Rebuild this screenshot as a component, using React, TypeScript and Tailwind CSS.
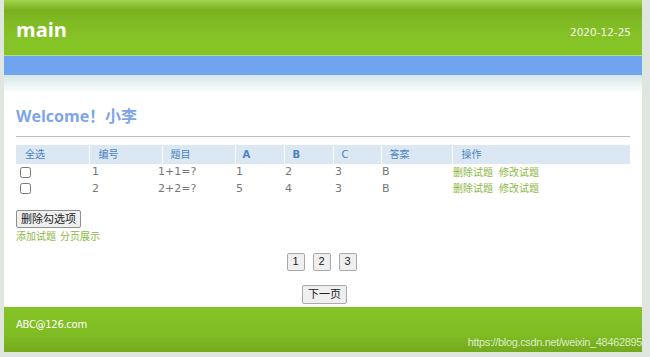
import React from 'react';

interface Question {
  id: number;
  title: string;
  a: string;
  b: string;
  c: string;
  answer: string;
}

const QUESTIONS: Question[] = [
  { id: 1, title: '1+1=?', a: '1', b: '2', c: '3', answer: 'B' },
  { id: 2, title: '2+2=?', a: '5', b: '4', c: '3', answer: 'B' },
];

const font = 'font-["DejaVu_Sans","Noto_Sans_CJK_SC",sans-serif]';

export default function App() {
  return (
    <div className={`w-[650px] h-[357px] bg-[#dfe5df] overflow-hidden ${font}`}>
      <div className="ml-[4px] w-[638px] bg-white">
        {/* header */}
        <div className="h-[55px] px-[12px] flex items-center justify-between bg-[linear-gradient(to_bottom,#a6d24e_0px,#79b01f_10px,#80b924_20px,#86c326_40px,#86c326_100%)]">
          <span className="text-white font-bold text-[20px] mt-[4px] font-['Open_Sans',sans-serif]">main</span>
          <span className="text-[#f4fbe8] text-[10.5px] mt-[10px] mr-[-1px]">2020-12-25</span>
        </div>
        <div className="h-px bg-[#b6dc80]" />
        <div className="h-[19px] bg-[#70a4f1]" />
        <div className="h-[18px] bg-[linear-gradient(to_bottom,#d4e6e7,#ffffff)]" />

        <div className="px-[12px]">
          <h1 className="pt-[12px] h-[42px] text-[16px] font-bold text-[#7ea6e6] leading-[22px] font-['Open_Sans','Noto_Sans_CJK_SC',sans-serif]">
            Welcome！小李
          </h1>
          <div className="h-px bg-[#bdbdbd] mt-[1px]" />

          <table className="mt-[8px] w-[614px] border-collapse text-[11px] text-[#777]">
            <thead>
              <tr className="h-[19px] bg-[#dbe8f4] text-[#4a83c0] text-[10px]">
                <th className="w-[73px] pl-[9px] text-left font-normal border-r border-white">全选</th>
                <th className="w-[73px] pl-[9px] text-left font-normal border-r border-white">编号</th>
                <th className="w-[73px] pl-[8px] text-left font-normal border-r border-white">题目</th>
                <th className="w-[49px] pl-[7px] text-left font-bold border-r border-white">A</th>
                <th className="w-[49px] pl-[8px] text-left font-bold border-r border-white">B</th>
                <th className="w-[48px] pl-[8px] text-left font-normal border-r border-white">C</th>
                <th className="w-[71px] pl-[8px] text-left font-normal border-r border-white">答案</th>
                <th className="pl-[9px] text-left font-normal">操作</th>
              </tr>
            </thead>
            <tbody>
              {QUESTIONS.map((q) => (
                <tr key={q.id} className="h-[16px]">
                  <td className="pl-[4px]">
                    <input type="checkbox" className="w-[11px] h-[11px] m-0 align-middle accent-white" />
                  </td>
                  <td className="pl-[3px]">{q.id}</td>
                  <td className="pl-0">
                    <span className="inline-block -ml-[4px]">{q.title}</span>
                  </td>
                  <td className="pl-[1px]">{q.a}</td>
                  <td className="pl-[1px]">{q.b}</td>
                  <td className="pl-[2px]">{q.c}</td>
                  <td className="pl-[1px]">{q.answer}</td>
                  <td className="pl-[1px] text-[10px] text-[#8cb843]">
                    <a className="cursor-pointer">删除试题</a>
                    <a className="ml-[6px] cursor-pointer">修改试题</a>
                  </td>
                </tr>
              ))}
            </tbody>
          </table>

          <button className="mt-[13px] h-[18px] px-[4px] text-[11px] text-[#222] bg-[#efefef] border border-[#8f8f8f] rounded-[2px] leading-none">
            删除勾选项
          </button>
          <div className="mt-0 text-[10px] text-[#8cb843] leading-[14px]">
            <a className="cursor-pointer">添加试题</a>
            <a className="ml-[4px] cursor-pointer">分页展示</a>
          </div>

          <div className="mt-[9px] flex justify-center gap-[8px] pr-[3px]">
            {[1, 2, 3].map((n) => (
              <button
                key={n}
                className="w-[18px] h-[18px] text-[11px] text-[#222] bg-[#efefef] border border-[#aaa] rounded-[2px] leading-none font-['Liberation_Sans',sans-serif]"
              >
                {n}
              </button>
            ))}
          </div>
          <div className="mt-[14px] flex justify-center pl-[3px]">
            <button className="w-[45px] h-[19px] text-[11px] text-[#222] bg-[#efefef] border border-[#aaa] rounded-[2px] leading-none">
              下一页
            </button>
          </div>
        </div>

        {/* footer */}
        <div className="mt-[3px] h-[45px] relative bg-[linear-gradient(to_bottom,#86c326_0%,#80bd24_60%,#74a91d_100%)]">
          <div className="pt-[10px] pl-[12px] text-[10px] text-white tracking-[-0.3px]">ABC@126.com</div>
          <span className="absolute right-0 bottom-[1px] text-[11px] text-[#d9ecc4] font-['Liberation_Sans',sans-serif] tracking-[-0.35px]">
            https://blog.csdn.net/weixin_48462895
          </span>
        </div>
      </div>
    </div>
  );
}
